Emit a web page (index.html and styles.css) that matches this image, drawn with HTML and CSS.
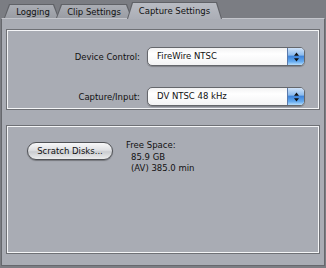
FILE: index.html
```html
<!DOCTYPE html>
<html>
    <head>
        <link rel="stylesheet" href="styles.css">
    </head>
    <body>
        <div class="tabs">
            <div class="tab tab-logging"><span>Logging</span></div>
            <div class="tab tab-clip"><span>Clip Settings</span></div>
            <div class="tab tab-capture active"><span>Capture Settings</span></div>
        </div>
        <div class="panel">
            <div class="group device-box">
                <div class="label">Device Control:</div>
                <div class="popup">
                    <span class="popup-text">FireWire NTSC</span>
                    <span class="stepper">
                        <svg width="7" height="12" viewBox="0 0 7 12"><path d="M3.5 1.5 L6 4.8 H1 Z M3.5 10.5 L6 7.2 H1 Z" fill="#111"/></svg>
                    </span>
                </div>
                <div class="label">Capture/Input:</div>
                <div class="popup">
                    <span class="popup-text">DV NTSC 48 kHz</span>
                    <span class="stepper">
                        <svg width="7" height="12" viewBox="0 0 7 12"><path d="M3.5 1.5 L6 4.8 H1 Z M3.5 10.5 L6 7.2 H1 Z" fill="#111"/></svg>
                    </span>
                </div>
            </div>
            <div class="group disk-box">
                <button type="button" class="pill">Scratch Disks...</button>
                <div class="free-space">
                    <div>Free Space:</div>
                    <div class="indent">85.9 GB</div>
                    <div class="indent">(AV) 385.0 min</div>
                </div>
            </div>
        </div>
    </body>
</html>
```
FILE: styles.css
```css
* {
    box-sizing: border-box;
}

body {
    margin: 0;
    width: 326px;
    height: 268px;
    background: #7b7d83;
    font-family: 'DejaVu Sans', sans-serif;
    font-size: 8.5px;
    color: #111;
    overflow: hidden;
}

.tabs {
    position: relative;
    z-index: 1;
    display: flex;
    align-items: flex-end;
    height: 18px;
    padding-left: 4px;
}

.tab {
    position: relative;
    z-index: 1;
    height: 14px;
    padding-top: 1px;
    line-height: 14px;
    text-align: center;
}

.tab::before,
.tab::after {
    content: '';
    position: absolute;
    z-index: -1;
    clip-path: polygon(5px 0, calc(100% - 5px) 0, 100% 100%, 0 100%);
}

.tab::before {
    inset: 0;
    background: #606267;
}

.tab::after {
    inset: 1px 1px 0 1px;
    background: linear-gradient(#aaadb4, #9a9da4);
}

.tab-logging {
    width: 55px;
    padding-left: 3px;
}

.tab-clip {
    width: 76px;
    margin-left: -3px;
}

.tab-capture {
    width: 95px;
    margin-left: -5px;
}

.active {
    z-index: 2;
    height: 17px;
    padding-top: 2px;
    margin-bottom: -1px;
}

.active::after {
    inset: 1px 1px 0 1px;
    background: linear-gradient(#b9bcc3, #abaeb6);
}

.panel {
    margin-left: 1px;
    width: 324px;
    height: 248px;
    background: #a9acb4;
    border: 1px solid #66686d;
    border-top-color: #c3c5cb;
    padding-top: 10px;
}

.group {
    margin-left: 4px;
    width: 314px;
    border: 1px solid #6e7075;
    box-shadow: inset 0 0 0 1px #f4f5f7;
}

.device-box {
    display: grid;
    grid-template-columns: 133px 158px;
    column-gap: 7px;
    row-gap: 15px;
    align-items: center;
    height: 81px;
    padding-top: 14px;
}

.label {
    text-align: right;
}

.popup {
    display: flex;
    height: 19px;
    border: 1px solid #65676c;
    border-radius: 5px;
    background: linear-gradient(#f2f2f3, #ffffff 35%, #f3f3f4);
    box-shadow: 0 1px 1px rgba(0, 0, 0, 0.25);
    overflow: hidden;
}

.popup-text {
    flex: 1;
    padding-left: 9px;
    line-height: 17px;
}

.stepper {
    display: flex;
    align-items: center;
    justify-content: center;
    width: 17px;
    border-left: 1px solid #5a79aa;
    background: linear-gradient(#cfe2f8, #8fbdee 40%, #3f86dc 50%, #66abef 80%, #b8defb);
}

.disk-box {
    display: flex;
    align-items: flex-start;
    gap: 13px;
    margin-top: 15px;
    height: 129px;
    padding: 16px 0 0 20px;
}

.pill {
    width: 86px;
    height: 18px;
    padding: 0;
    font-family: 'DejaVu Sans', sans-serif;
    font-size: 8.5px;
    color: #111;
    border: 1px solid #505256;
    border-radius: 9px;
    background: linear-gradient(#f8f8f9, #dfe0e3 45%, #caccd0 55%, #eceded);
    box-shadow: 0 1px 1px rgba(0, 0, 0, 0.3);
}

.free-space {
    margin-top: -2px;
    line-height: 11.5px;
}

.indent {
    padding-left: 5px;
}
```
